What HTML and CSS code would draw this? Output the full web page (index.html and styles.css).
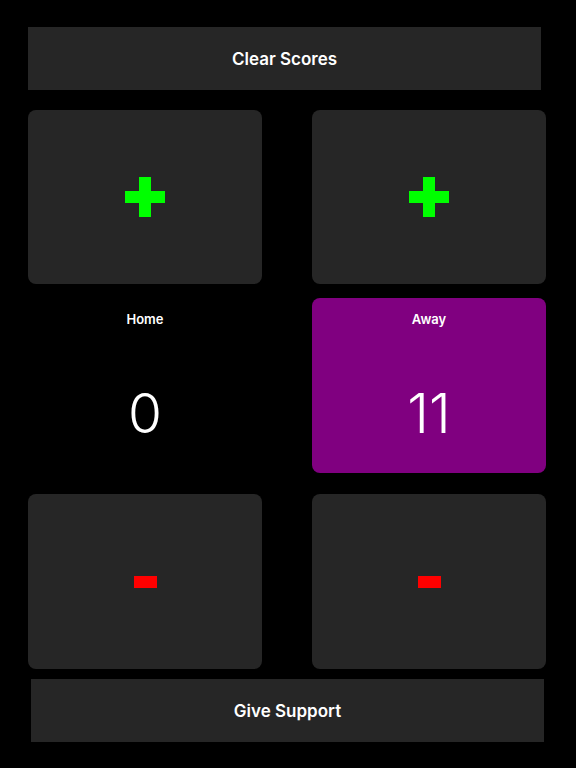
FILE: index.html
```html
<!DOCTYPE html>
<html>
<head>
<meta charset="utf-8">
<link rel="stylesheet" href="styles.css">
</head>
<body>
<div class="app">
  <div class="bar bar-top">Clear Scores</div>
  <div class="row row-btn row-first">
    <div class="card btn"><span class="plus"></span></div>
    <div class="card btn"><span class="plus"></span></div>
  </div>
  <div class="row row-score">
    <div class="card score">
      <div class="label">Home</div>
      <div class="num">0</div>
    </div>
    <div class="card score active">
      <div class="label">Away</div>
      <div class="num">11</div>
    </div>
  </div>
  <div class="row row-btn row-last">
    <div class="card btn"><span class="minus"></span></div>
    <div class="card btn"><span class="minus"></span></div>
  </div>
  <div class="bar bar-bottom">Give Support</div>
</div>
</body>
</html>
```
FILE: styles.css
```css
html, body {
  margin: 0;
  padding: 0;
  background: #000;
  width: 576px;
  height: 768px;
  overflow: hidden;
}
body {
  font-family: Inter, "Liberation Sans", sans-serif;
  color: #fff;
}
.app {
  display: flex;
  flex-direction: column;
  padding-top: 27px;
}
.bar {
  height: 63px;
  width: 513px;
  background: #262626;
  display: flex;
  align-items: center;
  justify-content: center;
  font-size: 17px;
  font-weight: 600;
}
.bar-top {
  margin-left: 28px;
}
.bar-bottom {
  margin-left: 31px;
  margin-top: 10px;
}
.row {
  display: flex;
  gap: 50px;
  margin-left: 28px;
}
.row-first {
  margin-top: 20px;
  height: 174px;
}
.row-score {
  margin-top: 14px;
  height: 175px;
}
.row-last {
  margin-top: 21px;
  height: 175px;
}
.card {
  width: 234px;
  border-radius: 8px;
}
.btn {
  background: #262626;
  display: flex;
  align-items: center;
  justify-content: center;
}
.score {
  display: flex;
  flex-direction: column;
  align-items: center;
}
.active {
  background: #800080;
}
.label {
  font-size: 13px;
  font-weight: 600;
  margin-top: 13px;
  line-height: 16px;
}
.num {
  font-size: 55px;
  font-weight: 300;
  line-height: 60px;
  margin-top: 56px;
}
.plus {
  position: relative;
  width: 40px;
  height: 40px;
}
.plus::before, .plus::after {
  content: "";
  position: absolute;
  background: #00ff00;
}
.plus::before {
  left: 14px;
  top: 0;
  width: 12px;
  height: 40px;
}
.plus::after {
  left: 0;
  top: 14px;
  width: 40px;
  height: 12px;
}
.minus {
  width: 23px;
  height: 12px;
  background: #ff0000;
}
```
